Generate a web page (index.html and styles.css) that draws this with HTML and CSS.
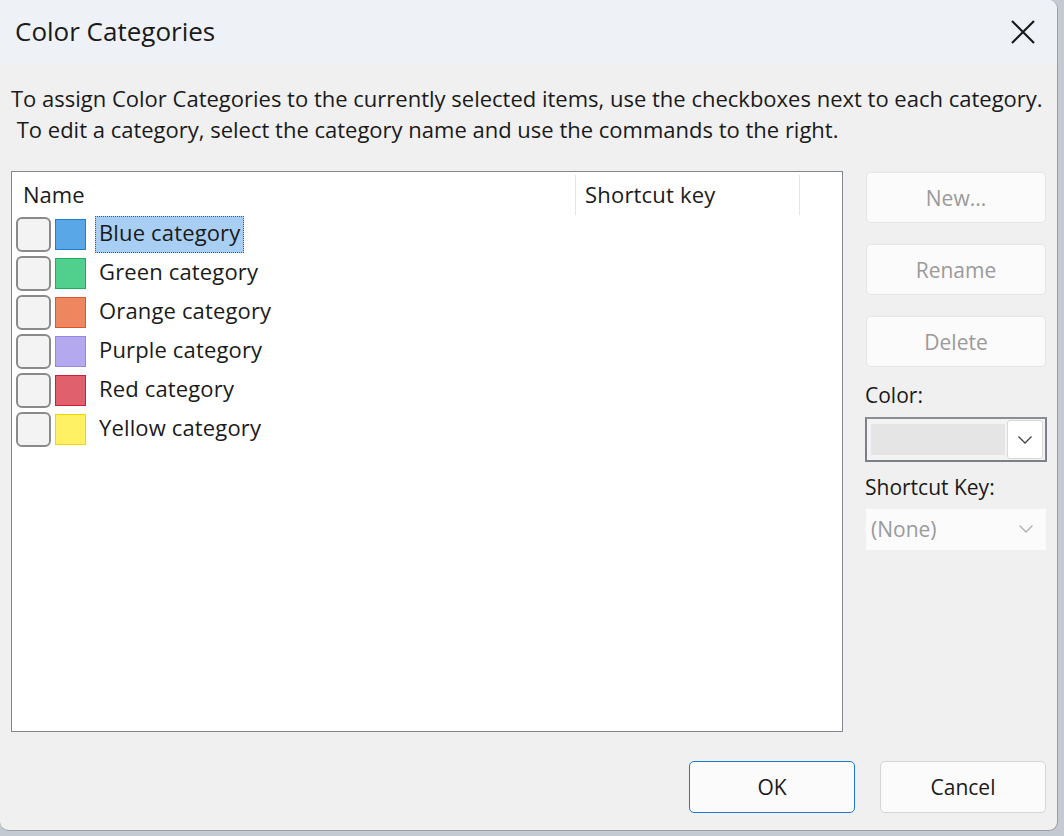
FILE: index.html
```html
<!DOCTYPE html>
<html>
<head>
<meta charset="utf-8">
<link rel="stylesheet" href="styles.css">
</head>
<body>
<div class="window">
  <div class="titlebar">
    <span class="title">Color Categories</span>
    <svg class="close" width="26" height="26" viewBox="0 0 26 26"><path d="M2 2 L24 24 M24 2 L2 24" stroke="#1a1a1a" stroke-width="2.2" fill="none"/></svg>
  </div>
  <div class="content">
    <p class="desc">To assign Color Categories to the currently selected items, use the checkboxes next to each category.<br>&nbsp;To edit a category, select the category name and use the commands to the right.</p>
    <div class="main">
      <div class="listbox">
        <div class="header">
          <div class="hcell hname">Name</div>
          <div class="hcell hkey">Shortcut key</div>
          <div class="hcell hrest"></div>
        </div>
        <div class="row"><span class="chk"></span><span class="sw blue"></span><span class="lbl sel">Blue category</span></div>
        <div class="row"><span class="chk"></span><span class="sw green"></span><span class="lbl">Green category</span></div>
        <div class="row"><span class="chk"></span><span class="sw orange"></span><span class="lbl">Orange category</span></div>
        <div class="row"><span class="chk"></span><span class="sw purple"></span><span class="lbl">Purple category</span></div>
        <div class="row"><span class="chk"></span><span class="sw red"></span><span class="lbl">Red category</span></div>
        <div class="row"><span class="chk"></span><span class="sw yellow"></span><span class="lbl">Yellow category</span></div>
      </div>
      <div class="side">
        <div class="btn dis">New...</div>
        <div class="btn dis">Rename</div>
        <div class="btn dis">Delete</div>
        <div class="label">Color:</div>
        <div class="colorsel">
          <div class="colorfill"></div>
          <div class="colorbtn"><svg width="16" height="10" viewBox="0 0 16 10"><path d="M1.5 1.5 L8 8 L14.5 1.5" stroke="#444" stroke-width="1.3" fill="none"/></svg></div>
        </div>
        <div class="label lbl2">Shortcut Key:</div>
        <div class="keysel"><span>(None)</span><svg width="16" height="10" viewBox="0 0 16 10"><path d="M1.5 1.5 L8 8 L14.5 1.5" stroke="#b0b0b0" stroke-width="1.3" fill="none"/></svg></div>
      </div>
    </div>
    <div class="footer">
      <div class="btn ok">OK</div>
      <div class="btn cancel">Cancel</div>
    </div>
  </div>
</div>
</body>
</html>
```
FILE: styles.css
```css
html, body {
  margin: 0;
  padding: 0;
}
body {
  width: 1064px;
  height: 836px;
  background: #c4cad2;
  font-family: "Open Sans", "Noto Sans", sans-serif;
  color: #1a1a1a;
  overflow: hidden;
}
.window {
  width: 1057px;
  height: 830px;
  background: #f0f0f0;
  border-right: 1px solid #9a9ea4;
  border-bottom: 1px solid #9a9ea4;
  border-radius: 0 9px 9px 9px;
  overflow: hidden;
  display: flex;
  flex-direction: column;
}
.titlebar {
  height: 64px;
  background: #eef2f6;
  display: flex;
  align-items: center;
  justify-content: space-between;
  padding: 0 21px 0 15px;
  flex: none;
}
.title {
  font-size: 26px;
  padding-bottom: 2px;
}
.close {
  display: block;
}
.content {
  flex: 1;
  padding: 0 0 0 11px;
  display: flex;
  flex-direction: column;
}
.desc {
  margin: 19px 0 0 0;
  font-size: 22px;
  line-height: 31px;
  white-space: nowrap;
}
.main {
  margin-top: 26px;
  display: flex;
  gap: 22px;
}
.listbox {
  width: 830px;
  height: 559px;
  background: #fff;
  border: 1px solid #838890;
  flex: none;
}
.header {
  height: 43px;
  display: flex;
  align-items: stretch;
}
.hcell {
  font-size: 22px;
  display: flex;
  align-items: center;
  padding-bottom: 2px;
}
.hname {
  width: 552px;
  padding-left: 11px;
  border-right: 1px solid #e5e5e5;
  margin: 3px 0 0 0;
}
.hkey {
  width: 214px;
  padding-left: 9px;
  border-right: 1px solid #e5e5e5;
  margin-top: 3px;
  letter-spacing: 0.2px;
}
.hrest {
  flex: 1;
}
.row {
  height: 39px;
  display: flex;
  align-items: center;
  padding-left: 4px;
}
.chk {
  border: 2px solid #8a8a8a;
  border-radius: 6px;
  background: #f3f3f3;
  box-sizing: content-box;
  flex: none;
  width: 31px;
  height: 31px;
}
.sw {
  width: 29px;
  height: 29px;
  margin-left: 4px;
  flex: none;
  border: 1px solid;
}
.blue { background: #5aa7e8; border-color: #1c80d8; }
.green { background: #50d08c; border-color: #1eae5e; }
.orange { background: #ee8660; border-color: #d85a2c; }
.purple { background: #b4a9ee; border-color: #9486e2; }
.red { background: #e0606e; border-color: #cc1f32; }
.yellow { background: #fff064; border-color: #f6d400; }
.lbl {
  margin-left: 9px;
  font-size: 22px;
  letter-spacing: 0.15px;
  padding: 1px 3px 6px 3px;
  border: 1px solid transparent;
  line-height: 28px;
}
.lbl.sel {
  background: #a8cff3;
  border: 1px dotted #555;
}
.side {
  width: 181px;
  display: flex;
  flex-direction: column;
  padding-top: 1px;
}
.btn {
  height: 48px;
  border: 1px solid #e6e6e6;
  border-radius: 5px;
  background: #fbfbfb;
  display: flex;
  align-items: center;
  justify-content: center;
  font-size: 21px;
  box-sizing: content-box;
  padding-bottom: 1px;
}
.btn.dis {
  color: #9a9a9a;
  width: 178px;
  margin-left: 1px;
  margin-bottom: 21px;
  height: 49px;
  padding-bottom: 0;
}
.label {
  font-size: 21px;
  margin-top: -7px;
  line-height: 28px;
}
.lbl2 {
  margin-top: 11px;
}
.colorsel {
  margin-top: 8px;
  width: 182px;
  height: 45px;
  box-sizing: border-box;
  border: 2px solid #7c8088;
  border-top-color: #8a8e94;
  display: flex;
  align-items: center;
  padding: 0 2px 0 4px;
  gap: 2px;
  background: #f3f3f3;
}
.colorfill {
  width: 134px;
  height: 31px;
  background: #e5e5e5;
}
.colorbtn {
  flex: 1;
  height: 37px;
  background: #fff;
  border: 1px solid #d8d8d8;
  border-radius: 3px;
  display: flex;
  align-items: center;
  justify-content: center;
}
.keysel {
  margin-top: 8px;
  width: 180px;
  height: 41px;
  background: #fbfbfb;
  display: flex;
  align-items: center;
  justify-content: space-between;
  padding: 0 12px 2px 5px;
  box-sizing: border-box;
  color: #9a9a9a;
  font-size: 21px;
  margin-left: 1px;
}
.footer {
  display: flex;
  justify-content: flex-end;
  gap: 25px;
  margin-top: 29px;
  padding-right: 11px;
}
.btn.ok, .btn.cancel {
  width: 164px;
  height: 49px;
  color: #1a1a1a;
}
.btn.ok {
  border-color: #1f78d1;
}
.btn.cancel {
  border-color: #d5d5d5;
}
```
